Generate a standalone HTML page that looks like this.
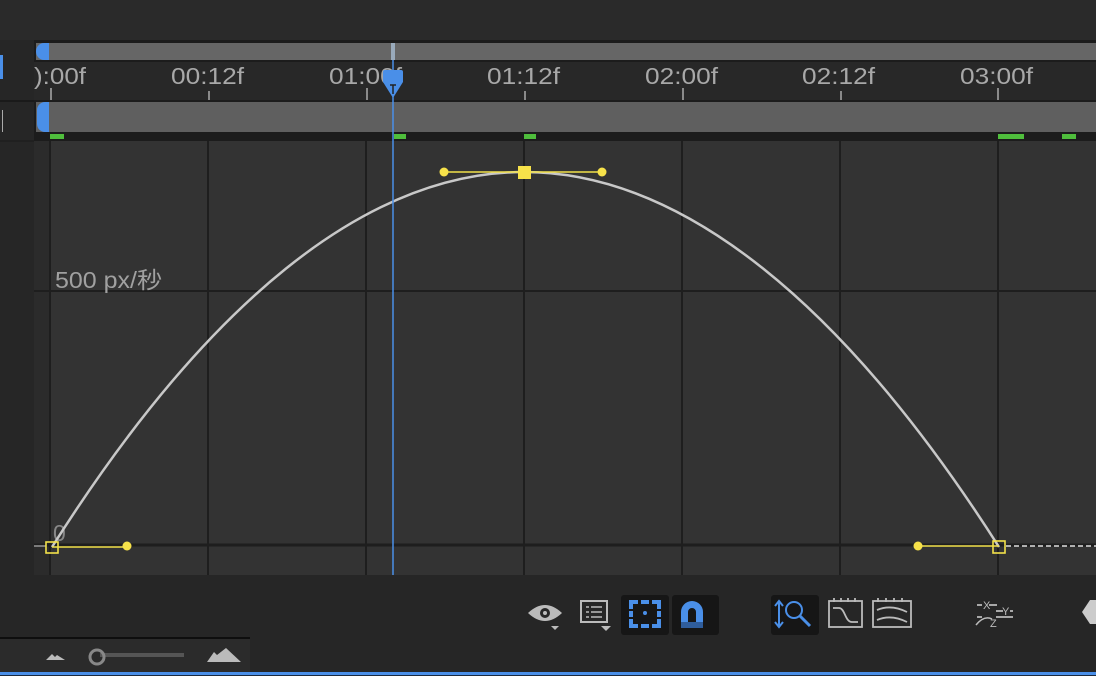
<!DOCTYPE html>
<html><head><meta charset="utf-8"><style>
html,body{margin:0;padding:0;background:#2a2a2a;width:1096px;height:676px;overflow:hidden}
svg{display:block}
text{font-family:"Liberation Sans","Noto Sans CJK JP",sans-serif}
</style></head><body>
<svg width="1096" height="676" viewBox="0 0 1096 676" xmlns="http://www.w3.org/2000/svg">
<rect x="0" y="0" width="1096" height="676" fill="#2a2a2a"/>
<rect x="0" y="40" width="34" height="598" fill="#262626"/>
<rect x="0" y="55" width="3" height="24" fill="#4a8fe8"/>
<rect x="2" y="110" width="1" height="22" fill="#aaa"/>
<line x1="0" y1="101" x2="34" y2="101" stroke="#1a1a1a" stroke-width="2"/>
<line x1="0" y1="141" x2="34" y2="141" stroke="#1a1a1a" stroke-width="1"/>
<rect x="34" y="40" width="1062" height="101" fill="#1c1c1c"/>
<rect x="36" y="43" width="1060" height="17" fill="#666"/>
<path d="M49 43 H44 A8 8.5 0 0 0 44 60 H49 Z" fill="#4a8fe8"/>
<rect x="34" y="62" width="1062" height="38" fill="#282828"/>
<rect x="36" y="102" width="1060" height="30" fill="#5f5f5f"/>
<path d="M49 102 H45 A8 8 0 0 0 37 110 V124 A8 8 0 0 0 45 132 H49 Z" fill="#4a8fe8"/>
<g stroke="#aaa" stroke-width="1.5">
<line x1="51" y1="88" x2="51" y2="100"/><line x1="209" y1="91" x2="209" y2="100"/>
<line x1="367" y1="88" x2="367" y2="100"/><line x1="525" y1="91" x2="525" y2="100"/>
<line x1="683" y1="88" x2="683" y2="100"/><line x1="841" y1="91" x2="841" y2="100"/>
<line x1="998" y1="88" x2="998" y2="100"/>
</g>
<g fill="#a8a8a8" font-size="23">
<text x="34" y="84" textLength="52" lengthAdjust="spacingAndGlyphs">):00f</text>
<text x="171" y="84" textLength="73" lengthAdjust="spacingAndGlyphs">00:12f</text>
<text x="329" y="84" textLength="73" lengthAdjust="spacingAndGlyphs">01:00f</text>
<text x="487" y="84" textLength="73" lengthAdjust="spacingAndGlyphs">01:12f</text>
<text x="645" y="84" textLength="73" lengthAdjust="spacingAndGlyphs">02:00f</text>
<text x="802" y="84" textLength="73" lengthAdjust="spacingAndGlyphs">02:12f</text>
<text x="960" y="84" textLength="73" lengthAdjust="spacingAndGlyphs">03:00f</text>
</g>
<g fill="#4fbe3c">
<rect x="50" y="134" width="14" height="5"/><rect x="394" y="134" width="12" height="5"/>
<rect x="524" y="134" width="12" height="5"/><rect x="998" y="134" width="26" height="5"/>
<rect x="1062" y="134" width="14" height="5"/>
</g>
<rect x="34" y="141" width="1062" height="434" fill="#333333"/>
<rect x="34" y="141" width="16" height="434" fill="#2b2b2b"/>
<g stroke="#1e1e1e" stroke-width="2">
<line x1="50" y1="141" x2="50" y2="575"/><line x1="208" y1="141" x2="208" y2="575"/>
<line x1="366" y1="141" x2="366" y2="575"/><line x1="524" y1="141" x2="524" y2="575"/>
<line x1="682" y1="141" x2="682" y2="575"/><line x1="840" y1="141" x2="840" y2="575"/>
<line x1="998" y1="141" x2="998" y2="575"/>
<line x1="34" y1="291" x2="1096" y2="291"/>
<line x1="34" y1="545" x2="1096" y2="545" stroke-width="3"/>
</g>
<text x="55" y="288" fill="#a0a0a0" font-size="23" textLength="107" lengthAdjust="spacingAndGlyphs">500 px/秒</text>
<text x="53" y="541" fill="#888" font-size="23">0</text>
<line x1="34" y1="546" x2="46" y2="546" stroke="#999" stroke-width="1.5"/>
<line x1="1006" y1="546" x2="1096" y2="546" stroke="#ddd" stroke-width="1.5" stroke-dasharray="5,3"/>
<path d="M52 547 C 205 305 365 172 524 172 C 683 172 845 305 999 547" fill="none" stroke="#c8c8c8" stroke-width="2.5"/>
<g stroke="#f2e14a" stroke-width="1.6" fill="#f7e24a">
<line x1="52" y1="547" x2="127" y2="547"/><circle cx="127" cy="546" r="4.5" stroke="none"/>
<line x1="444" y1="172" x2="602" y2="172"/><circle cx="444" cy="172" r="4.5" stroke="none"/><circle cx="602" cy="172" r="4.5" stroke="none"/>
<rect x="518" y="166" width="13" height="13" stroke="none"/>
<line x1="918" y1="546" x2="999" y2="546"/><circle cx="918" cy="546" r="4.5" stroke="none"/>
<rect x="46" y="542" width="12" height="11" fill="none"/>
<rect x="993" y="541" width="12" height="12" fill="none"/>
</g>
<line x1="393" y1="43" x2="393" y2="575" stroke="#4a8fe8" stroke-width="1.5"/>
<rect x="391" y="43" width="4" height="17" fill="#9ab"/>
<path d="M383 72 Q383 70 385 70 H401 Q403 70 403 72 V82 L393 98 L383 82 Z" fill="#4a8fe8"/>
<line x1="390" y1="85" x2="396" y2="85" stroke="#222" stroke-width="1.5"/><line x1="393" y1="85" x2="393" y2="94" stroke="#222" stroke-width="1.5"/>
<rect x="34" y="575" width="1062" height="62" fill="#262626"/>
<rect x="0" y="637" width="250" height="2" fill="#0e0e0e"/>
<rect x="0" y="639" width="250" height="33" fill="#2b2b2b"/>
<rect x="250" y="637" width="846" height="36" fill="#262626"/>
<rect x="0" y="672" width="1096" height="4" fill="#4a8fe8"/>
<rect x="0" y="675" width="1096" height="1" fill="#1a2a40"/>
<path d="M46 660 L52 654 L55 657 L57 655 L65 660 Z" fill="#bbb"/>
<rect x="100" y="653" width="84" height="4" fill="#555"/>
<circle cx="97" cy="657" r="7" fill="none" stroke="#888" stroke-width="3"/>
<path d="M207 662 L214 652 L217 655 L226 648 L241 662 Z" fill="#bbb"/>
<g fill="none" stroke="#bbb" stroke-width="2">
<path d="M528 613 Q545 597 562 613 Q545 629 528 613 Z" fill="#bbb" stroke="none"/>
<circle cx="545" cy="613" r="5" fill="#262626" stroke="none"/><circle cx="545" cy="613" r="2" fill="#bbb" stroke="none"/>
<path d="M551 626 h8 l-4 4 z" fill="#bbb" stroke="none"/>
<rect x="581" y="601" width="26" height="21"/>
<path d="M586 607h3M591 607h11M586 612h3M591 612h11M586 617h3M591 617h11" stroke-width="1.6"/>
<path d="M601 626 h10 l-5 5 z" fill="#bbb" stroke="none"/>
</g>
<rect x="621" y="595" width="48" height="40" rx="3" fill="#161616"/>
<rect x="672" y="595" width="47" height="40" rx="3" fill="#161616"/>
<rect x="631" y="602" width="28" height="24" fill="none" stroke="#4a8fe8" stroke-width="4"/>
<g fill="#161616"><rect x="638" y="599" width="3" height="30"/><rect x="649" y="599" width="3" height="30"/><rect x="628" y="609" width="34" height="2"/><rect x="628" y="617" width="34" height="2"/></g>
<circle cx="645" cy="613" r="2" fill="#4a8fe8"/>
<path d="M681 628 V612 A11 11 0 0 1 703 612 V628 H696 V612 A4 4 0 0 0 688 612 V628 Z" fill="#4a8fe8"/>
<rect x="681" y="622" width="22" height="6" fill="#2f5d9c"/>
<rect x="771" y="595" width="48" height="40" rx="3" fill="#161616"/>
<g stroke="#4a8fe8" stroke-width="2" fill="none">
<line x1="779" y1="602" x2="779" y2="626"/>
<path d="M775 606 L779 601 L783 606 M775 622 L779 627 L783 622"/>
<circle cx="794" cy="610" r="8"/><line x1="800" y1="616" x2="810" y2="626" stroke-width="3"/>
</g>
<g stroke="#bbb" stroke-width="1.8" fill="none">
<rect x="829" y="601" width="33" height="26"/>
<path d="M834 598v4M841 598v4M848 598v4M855 598v4"/>
<path d="M833 608h6 c6 0 6 14 13 14h6" />
<rect x="873" y="601" width="38" height="26"/>
<path d="M878 598v4M886 598v4M894 598v4M902 598v4"/>
<path d="M877 610 q14 -6 30 2 M877 620 q14 -6 30 2"/>
<path d="M977 605h5M989 605h8M996 611h7M1010 611h3M996 617h17M977 617h5"/>
</g>
<g fill="#bbb" font-size="11"><text x="983" y="609">X</text><text x="1002" y="615">Y</text><text x="990" y="627">Z</text></g>
<path d="M976 625 q8 -10 16 -6" stroke="#bbb" stroke-width="1.5" fill="none"/>
<path d="M1096 600 L1090 600 L1082 612 L1090 624 L1096 624 Z" fill="#ccc"/>
</svg>
</body></html>
